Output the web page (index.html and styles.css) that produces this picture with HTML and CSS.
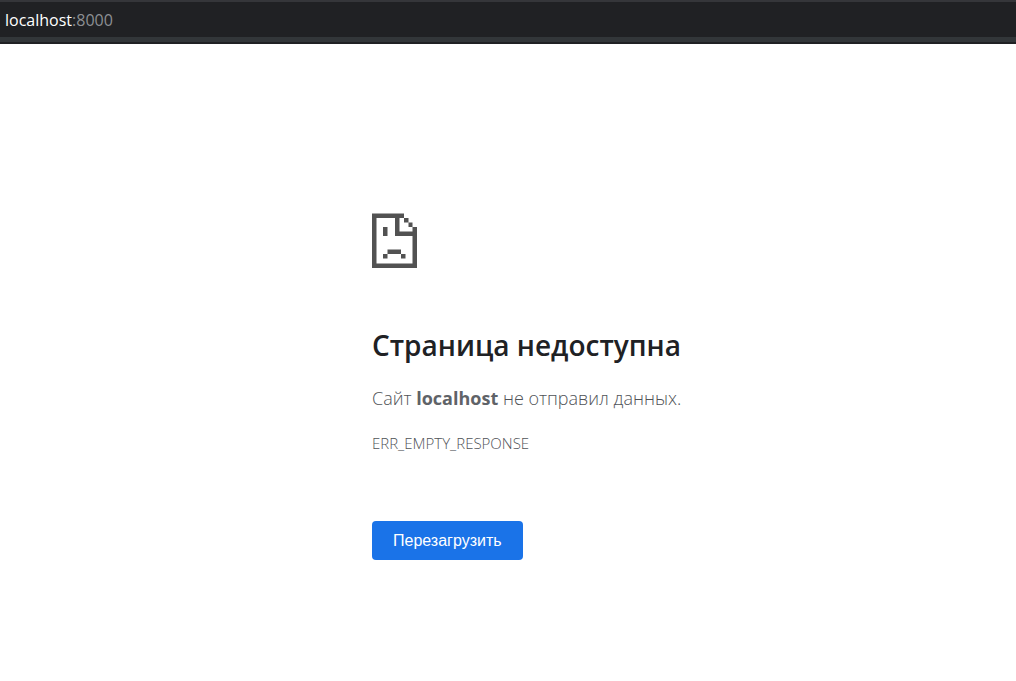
FILE: index.html
```html
<!DOCTYPE html>
<html lang="ru">
<head>
<meta charset="utf-8">
<meta name="viewport" content="width=device-width, initial-scale=1">
<title>localhost</title>
<link rel="stylesheet" href="styles.css">
</head>
<body>
<header class="address-bar"><span class="host">localhost</span><span class="port">:8000</span></header>
<main class="error-page">
  <svg class="error-icon" viewBox="0 0 90 110" aria-hidden="true">
    <path fill="#525252" d="M0 1H64V10H55V37H81V28H90V110H0ZM9 10V101H81V46H46V10ZM64 10H73V19H64ZM73 19H81V28H73ZM22 28H31V46H22ZM31 73H58V82H31ZM22 82H31V91H22ZM58 82H67V91H58Z"/>
  </svg>
  <h1 class="title">Страница недоступна</h1>
  <p class="summary">Сайт <strong>localhost</strong> не отправил данных.</p>
  <p class="error-code">ERR_EMPTY_RESPONSE</p>
  <button class="reload" type="button">Перезагрузить</button>
</main>
</body>
</html>
```
FILE: styles.css
```css
body {
  margin: 0;
  background: #fff;
  color: #505357;
  font-family: "Segoe UI", "Open Sans", "Noto Sans", sans-serif;
}

.address-bar {
  box-sizing: border-box;
  height: 44px;
  padding: 6px 5px 0;
  border-top: 2px solid #35363a;
  background: linear-gradient(#202124 35px, #323639 35px, #323639 40px, #202124 40px);
  font-size: 16px;
  line-height: 24px;
}

.host {
  color: #fff;
}

.port {
  color: #8c8f93;
}

.error-page {
  display: flex;
  flex-direction: column;
  align-items: flex-start;
  padding: 169px 24px 24px;
  margin-left: 348px;
}

.error-icon {
  width: 45px;
  height: 55px;
}

.title {
  margin: 56px 0 0;
  color: #202124;
  font-size: 28px;
  font-weight: 600;
  line-height: 42px;
}

.summary {
  margin: 17px 0 0;
  font-size: 18px;
  font-weight: 300;
  line-height: 30px;
}

.summary strong {
  color: #5f6368;
  font-weight: 700;
}

.error-code {
  margin: 20px 0 0;
  font-size: 15px;
  font-weight: 300;
  line-height: 20px;
}

.reload {
  margin: 68px 0 0;
  padding: 0 21px;
  border: 0;
  border-radius: 4px;
  background: #1a73e8;
  color: #fff;
  font-family: "Liberation Sans", Arial, sans-serif;
  font-size: 16px;
  line-height: 39px;
}
```
